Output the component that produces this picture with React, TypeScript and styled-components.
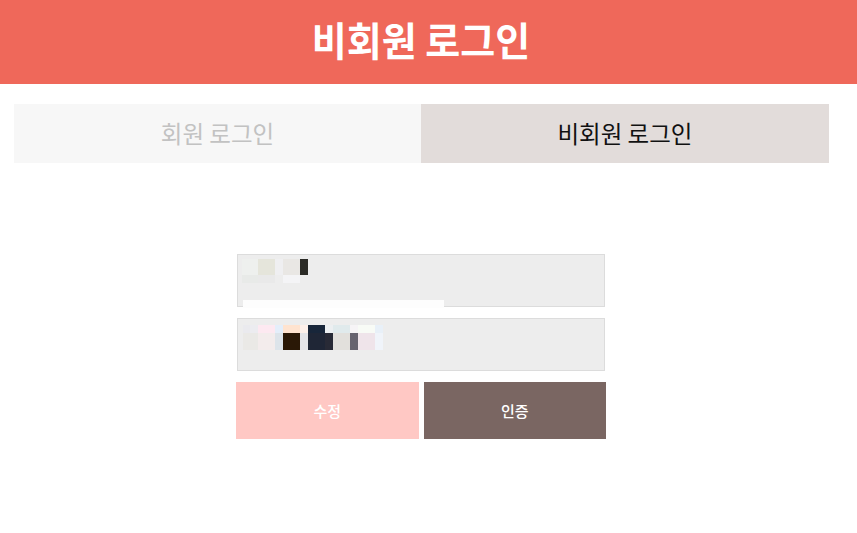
import React from "react";
import styled, { createGlobalStyle } from "styled-components";

const Global = createGlobalStyle`
  html, body { margin: 0; padding: 0; background: #ffffff; }
  body { font-family: "Noto Sans CJK KR", "Noto Sans", sans-serif; }
  * { box-sizing: border-box; }
`;

const Page = styled.div`
  width: 857px;
  min-height: 533px;
  background: #fff;
`;

const Header = styled.header`
  height: 84px;
  background: #ef685a;
  display: flex;
  align-items: center;
  justify-content: center;
  padding: 0 15px 6px 0;
`;

const Title = styled.h1`
  margin: 0;
  color: #fff;
  font-size: 38px;
  font-weight: 700;
  letter-spacing: 0;
  line-height: 1;
  transform: scaleY(1.06);
`;

const Main = styled.main`
  margin: 20px 28px 0 14px;
  display: flex;
  flex-direction: column;
  align-items: center;
`;

const Tabs = styled.div`
  width: 100%;
  display: grid;
  grid-template-columns: 407px 1fr;
  height: 59px;
`;

const Tab = styled.button<{ $active?: boolean }>`
  border: 0;
  margin: 0;
  padding: 0 0 1px;
  font-family: inherit;
  font-size: 23.5px;
  background: ${(p) => (p.$active ? "#e2dcda" : "#f7f7f7")};
  color: ${(p) => (p.$active ? "#111" : "#c2c2c2")};
  display: flex;
  align-items: center;
  justify-content: center;
`;

const Form = styled.form`
  margin: 91px 1px 0 0;
  width: 370px;
  display: flex;
  flex-direction: column;
  gap: 11px;
`;

const Field = styled.div`
  position: relative;
  margin: 0 1px;
  height: 53px;
  background: #ededed;
  border: 1px solid #dcdcdc;
  padding: 4px 0 0 4px;
`;

const Cover = styled.div`
  position: absolute;
  left: 5px;
  bottom: -2px;
  width: 201px;
  height: 8px;
  background: #fdfdfd;
`;

const Buttons = styled.div`
  display: grid;
  grid-template-columns: 1fr 1fr;
  gap: 5px;
`;

const Btn = styled.button<{ $variant: "edit" | "confirm" }>`
  height: 57px;
  border: 0;
  font-family: inherit;
  font-size: 15px;
  font-weight: 500;
  color: #fff;
  background: ${(p) => (p.$variant === "edit" ? "#ffc8c4" : "#7a6662")};
`;

type Px = [number, number, number, number, string];

const Mosaic = ({ cells }: { cells: Px[] }) => (
  <svg width="160" height="30" style={{ display: "block" }}>
    {cells.map(([x, y, w, h, c], i) => (
      <rect key={i} x={x} y={y} width={w} height={h} fill={c} />
    ))}
  </svg>
);

const first: Px[] = [
  [0, 0, 16, 16, "#eef0ee"],
  [16, 0, 17, 16, "#e5e5db"],
  [33, 0, 8, 16, "#efeff1"],
  [41, 0, 17, 16, "#e9e7e4"],
  [58, 0, 8, 16, "#2b2b26"],
  [0, 16, 16, 8, "#e8eae8"],
  [16, 16, 17, 8, "#e9e9e9"],
  [41, 16, 17, 8, "#f4f4f6"],
];

const second: Px[] = [
  [1, 2, 8, 8, "#eaeaee"],
  [8, 2, 8, 8, "#ececf0"],
  [16, 2, 17, 8, "#fde9f1"],
  [33, 2, 8, 8, "#e4eefa"],
  [41, 2, 17, 8, "#ffe3cf"],
  [58, 2, 8, 8, "#fdf0ea"],
  [66, 2, 17, 8, "#18263a"],
  [83, 2, 8, 8, "#eceff1"],
  [91, 2, 17, 8, "#e0eaec"],
  [108, 2, 8, 8, "#f6f4f6"],
  [116, 2, 17, 8, "#f8fbf6"],
  [133, 2, 8, 8, "#e8f0f8"],
  [1, 10, 15, 17, "#eae9e6"],
  [16, 10, 17, 17, "#f3ecec"],
  [33, 10, 8, 17, "#dde4ea"],
  [41, 10, 17, 17, "#2a1806"],
  [58, 10, 8, 17, "#e4e4e8"],
  [66, 10, 17, 17, "#1f2636"],
  [83, 10, 8, 17, "#282a36"],
  [91, 10, 17, 17, "#e2e0dc"],
  [108, 10, 8, 17, "#67636f"],
  [116, 10, 17, 17, "#efe4ea"],
  [133, 10, 8, 17, "#f0f4fa"],
];

export default function App() {
  return (
    <Page>
      <Global />
      <Header>
        <Title>비회원 로그인</Title>
      </Header>
      <Main>
        <Tabs>
          <Tab type="button">회원 로그인</Tab>
          <Tab type="button" $active>
            비회원 로그인
          </Tab>
        </Tabs>
        <Form onSubmit={(e) => e.preventDefault()}>
          <Field>
            <Mosaic cells={first} />
            <Cover />
          </Field>
          <Field>
            <Mosaic cells={second} />
          </Field>
          <Buttons>
            <Btn type="button" $variant="edit">수정</Btn>
            <Btn type="submit" $variant="confirm">인증</Btn>
          </Buttons>
        </Form>
      </Main>
    </Page>
  );
}
